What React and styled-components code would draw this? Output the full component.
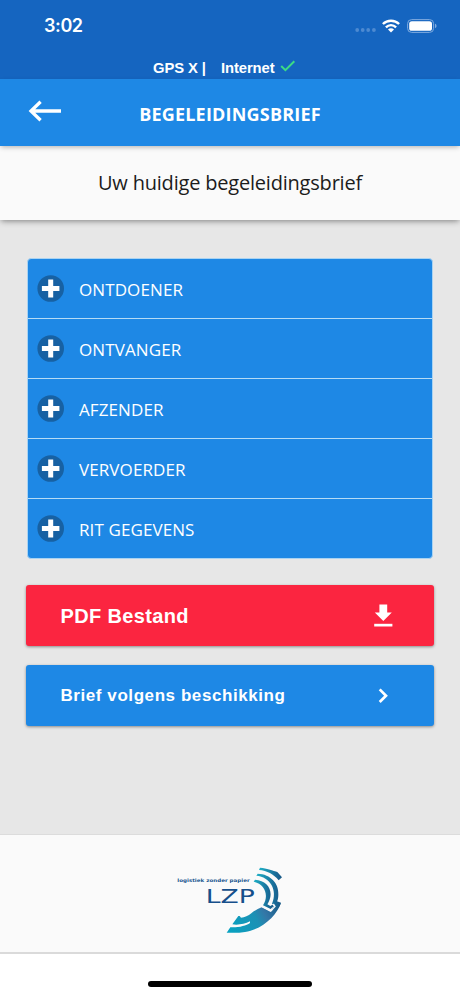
import React from 'react';
import styled, { createGlobalStyle } from 'styled-components';

const GlobalStyle = createGlobalStyle`
  * {
    box-sizing: border-box;
  }

  body {
    margin: 0;
    background-color: #ffffff;
    font-family: "Open Sans", sans-serif;
  }
`;

const Screen = styled.div`
  display: flex;
  flex-direction: column;
  width: 460px;
  height: 996px;
  overflow: hidden;
`;

const StatusBar = styled.div`
  height: 79px;
  background-color: #1565c0;
  color: #ffffff;
`;

const StatusRow = styled.div`
  display: flex;
  align-items: center;
  justify-content: space-between;
  height: 51px;
  padding: 0 23.5px 0 44px;
`;

const Clock = styled.span`
  font-family: Inter, sans-serif;
  font-size: 18px;
  font-weight: 600;
  letter-spacing: -0.4px;
`;

const StatusIcons = styled.div`
  display: flex;
  align-items: center;
`;

const SignalIcon = styled.svg`
  margin-top: 9px;
`;

const Connection = styled.div`
  display: flex;
  align-items: center;
  height: 28px;
  padding: 5px 0 0 153px;
  font-family: "Liberation Sans", sans-serif;
  font-size: 14.8px;
  font-weight: 700;
  letter-spacing: -0.1px;
  line-height: 20px;
`;

const ConnectionItem = styled.span`
  width: ${({ width }) => width}px;
  white-space: nowrap;
`;

const CheckMark = styled.svg`
  margin-bottom: 4px;
`;

const Header = styled.header`
  position: relative;
  z-index: 2;
  display: grid;
  grid-template-columns: 90px 1fr 90px;
  align-items: center;
  height: 67px;
  background-color: #1e88e5;
  box-shadow: 0 2px 5px -1px rgba(0, 0, 0, 0.3);
`;

const BackButton = styled.button`
  display: flex;
  margin: 0 0 4px 28px;
  padding: 0;
  border: none;
  background: none;
  cursor: pointer;
`;

const Title = styled.h1`
  margin: 3px 0 0;
  color: #ffffff;
  font-size: 18px;
  font-weight: 700;
  letter-spacing: 0.2px;
  line-height: 24px;
  text-align: center;
  white-space: nowrap;
`;

const SubTitle = styled.div`
  position: relative;
  z-index: 1;
  height: 74px;
  background-color: #fafafa;
  box-shadow: 0 2px 6px -1px rgba(0, 0, 0, 0.45);
  color: #1c1c1c;
  font-size: 20px;
  letter-spacing: -0.2px;
  line-height: 74px;
  text-align: center;
`;

const Content = styled.main`
  display: flex;
  flex-direction: column;
  height: 614px;
  padding: 38px 26px 0;
  background-color: #e7e7e7;
`;

const Accordion = styled.ul`
  margin: 0 0 26px 1px;
  padding: 0;
  width: 406px;
  border: 1px solid #a9d3f2;
  border-radius: 4px;
  background-color: #1e88e5;
  list-style: none;
`;

const AccordionItem = styled.li`
  display: flex;
  align-items: center;
  height: 60px;
  padding-left: 9px;
  border-bottom: 1px solid #b5dcf5;
  color: #ffffff;
  font-size: 17px;
  letter-spacing: 0.1px;

  &:last-child {
    height: 59px;
    border-bottom: none;
  }
`;

const ItemName = styled.span`
  margin: 3px 0 0 15px;
  line-height: 24px;
`;

const ActionButton = styled.button`
  display: flex;
  align-items: center;
  justify-content: space-between;
  width: 408px;
  height: 61px;
  margin-bottom: 19px;
  padding: 0 38px 0 34.5px;
  border: none;
  border-radius: 3px;
  background-color: ${({ color }) => color};
  box-shadow: 0 1px 3px rgba(0, 0, 0, 0.4);
  color: #ffffff;
  font-family: "Liberation Sans", sans-serif;
  font-size: ${({ size }) => size}px;
  font-weight: 700;
  letter-spacing: ${({ spacing }) => spacing}px;
  cursor: pointer;
`;

const ActionLabel = styled.span`
  padding-top: ${({ offset }) => offset}px;
`;

const Footer = styled.footer`
  height: 120px;
  padding: 20px 0 0 170px;
  border-top: 1px solid #dcdcdc;
  border-bottom: 2px solid #dadada;
  background-color: #fafafa;
`;

const HomeArea = styled.div`
  display: flex;
  justify-content: center;
  padding-top: 27px;
`;

const HomeBar = styled.div`
  width: 164px;
  height: 6px;
  border-radius: 3px;
  background-color: #000000;
`;

const SignalDots = () => (
  <SignalIcon width="22" height="6" viewBox="0 0 22 6" fill="#4d8ad1">
    <circle cx="2.2" cy="3" r="1.9" />
    <circle cx="7.7" cy="3" r="1.9" />
    <circle cx="13.2" cy="3" r="1.9" />
    <circle cx="18.9" cy="3" r="1.9" />
  </SignalIcon>
);

const WifiSvg = styled.svg`
  margin: 0 7px 0 5px;
`;

const WifiIcon = () => (
  <WifiSvg width="18" height="14" viewBox="0 0 18 14">
    <g fill="none" stroke="#fff" strokeWidth="2.4">
      <path d="M.9 5C5.4 .6 12.6 .6 17.1 5" />
      <path d="M3.9 8.3C6.8 5.4 11.2 5.4 14.1 8.3" />
    </g>
    <path d="M6 10.5C7.7 8.9 10.3 8.9 12 10.5L9 13.6Z" fill="#fff" />
  </WifiSvg>
);

const BatteryIcon = () => (
  <svg width="30" height="14" viewBox="0 0 30 14">
    <rect x=".6" y=".6" width="26" height="12.8" rx="4" fill="none" stroke="#7fabdf" />
    <rect x="2.2" y="2.2" width="22.8" height="9.6" rx="2.6" fill="#fff" />
    <path d="M28 4.8C30 5.3 30 8.7 28 9.2Z" fill="#7fabdf" />
  </svg>
);

const CheckIcon = () => (
  <CheckMark width="16" height="12" viewBox="0 0 16 12">
    <path d="M1.2 6L5.4 10.1L14.3 1.2" fill="none" stroke="#3ddc84" strokeWidth="2" />
  </CheckMark>
);

const BackIcon = () => (
  <svg width="34" height="22" viewBox="0 0 34 22">
    <path d="M33 11H3M12.6 1.8L3 11L12.6 20.2" fill="none" stroke="#fff" strokeWidth="3.3" />
  </svg>
);

const PlusIcon = () => (
  <svg width="27" height="28" viewBox="0 0 27 28">
    <circle cx="13.7" cy="13.5" r="13.3" fill="#1761a3" />
    <path d="M13.7 4.6V22.4M4.9 13.5H22.4" stroke="#fff" strokeWidth="5" />
  </svg>
);

const DownloadIcon = () => (
  <svg width="25" height="24" viewBox="0 0 25 24" fill="#fff">
    <path d="M8.4 .6H16.2V8.6H20.8L12.3 17.1L3.8 8.6H8.4Z" />
    <path d="M3.2 19.8H21.4V22.5H3.2Z" />
  </svg>
);

const ArrowIcon = () => (
  <svg width="25" height="18" viewBox="0 0 25 18">
    <path d="M8.7 2.4L15 8.7L8.7 15" fill="none" stroke="#fff" strokeWidth="2.7" />
  </svg>
);

const Logo = () => (
  <svg width="120" height="90" viewBox="0 0 360 270">
    <defs>
      <linearGradient id="arc" x1="0" x2="1" y1="0" y2="0">
        <stop offset="0" stopColor="#1fb0c6" />
        <stop offset="0.75" stopColor="#186a97" />
        <stop offset="1" stopColor="#1a5785" />
      </linearGradient>
      <linearGradient id="road" gradientUnits="userSpaceOnUse" x1="180" y1="225" x2="330" y2="145">
        <stop offset="0" stopColor="#08a1c0" />
        <stop offset="0.5" stopColor="#1c91b5" />
        <stop offset="0.68" stopColor="#3477a7" />
        <stop offset="1" stopColor="#155a86" />
      </linearGradient>
    </defs>
    <text x="22" y="80" fill="#17558f" fontFamily="DejaVu Sans" fontSize="14" fontWeight="700" textLength="217" lengthAdjust="spacingAndGlyphs">logistiek zonder papier</text>
    <text x="107" y="143" fill="#164f8b" fontFamily="DejaVu Sans" fontSize="58" textLength="147" lengthAdjust="spacingAndGlyphs">LZP</text>
    <g fill="url(#arc)">
      <path d="M270 38C291 40 307 46 315 49L322 51L336 67L326 76C311 57 291 47 267 45Z" />
      <path d="M263 56C302 57 327 86 325 119C325 129 323 136 321 139L333 143C331 151 323 160 316 168L306 161L313 151L306 146C324 105 300 65 259 62Z" />
      <path d="M255 74C287 76 306 98 301 126C299 136 295 143 292 148L301 153L307 149L311 153L302 162L279 151C298 121 285 88 251 80Z" />
    </g>
    <path d="M205 183L209 183L213 188C224 187 235 183 244 175C251 168 264 162 275 157L302 171L313 160L333 143C321 181 277 223 225 231C207 234 189 234 170 233L181 217C208 218 228 212 240 204L240 199C224 207 204 211 187 208Z" fill="url(#road)" />
    <path d="M275 154L303 167L315 154L310 147" fill="none" stroke="#fafafa" strokeWidth="4" />
  </svg>
);

const items = ['ONTDOENER', 'ONTVANGER', 'AFZENDER', 'VERVOERDER', 'RIT GEGEVENS'];

const App = () => (
  <>
    <GlobalStyle />
    <Screen>
      <StatusBar>
        <StatusRow>
          <Clock>3:02</Clock>
          <StatusIcons>
            <SignalDots />
            <WifiIcon />
            <BatteryIcon />
          </StatusIcons>
        </StatusRow>
        <Connection>
          <ConnectionItem width={68}>GPS X |</ConnectionItem>
          <ConnectionItem width={58.5}>Internet</ConnectionItem>
          <CheckIcon />
        </Connection>
      </StatusBar>
      <Header>
        <BackButton aria-label="Terug">
          <BackIcon />
        </BackButton>
        <Title>BEGELEIDINGSBRIEF</Title>
      </Header>
      <SubTitle>Uw huidige begeleidingsbrief</SubTitle>
      <Content>
        <Accordion>
          {items.map((item) => (
            <AccordionItem key={item}>
              <PlusIcon />
              <ItemName>{item}</ItemName>
            </AccordionItem>
          ))}
        </Accordion>
        <ActionButton color="#fb2540" size={20} spacing={0.35}>
          <ActionLabel offset={2}>PDF Bestand</ActionLabel>
          <DownloadIcon />
        </ActionButton>
        <ActionButton color="#1e88e5" size={17} spacing={0.57}>
          <ActionLabel offset={0}>Brief volgens beschikking</ActionLabel>
          <ArrowIcon />
        </ActionButton>
      </Content>
      <Footer>
        <Logo />
      </Footer>
      <HomeArea>
        <HomeBar />
      </HomeArea>
    </Screen>
  </>
);

export default App;
